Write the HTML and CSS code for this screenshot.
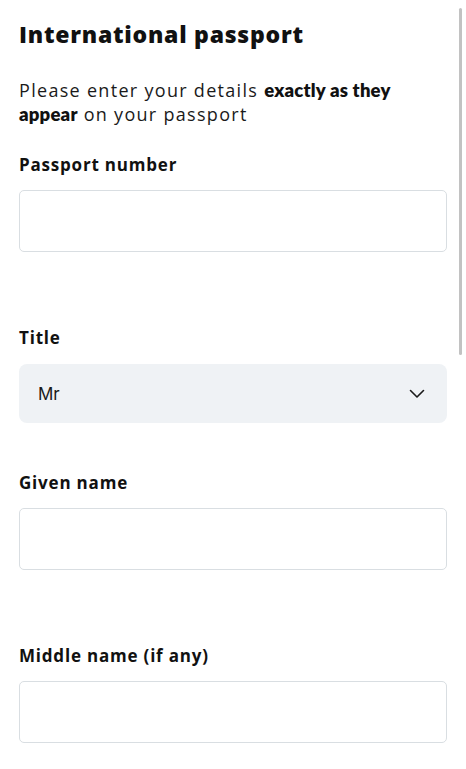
FILE: index.html
```html
<!DOCTYPE html>
<html lang="en">
<head>
<meta charset="utf-8">
<title>International passport</title>
<link rel="stylesheet" href="styles.css">
</head>
<body>
<main class="page">
  <h1 class="title">International passport</h1>
  <p class="intro">Please enter your details <strong>exactly as they</strong> <strong>appear</strong> on your passport</p>
  <form class="form">
    <div class="field field--text">
      <label class="label" for="pn">Passport number</label>
      <input class="input" id="pn" type="text">
    </div>
    <div class="field field--select">
      <label class="label" for="title">Title</label>
      <div class="select">
        <span class="select-value">Mr</span>
        <svg class="chevron" width="16" height="10" viewBox="0 0 16 10" aria-hidden="true"><path d="M1.5 1.5 L8 8 L14.5 1.5" fill="none" stroke="#1a1a1a" stroke-width="1.6" stroke-linecap="round" stroke-linejoin="round"/></svg>
      </div>
    </div>
    <div class="field field--text">
      <label class="label" for="gn">Given name</label>
      <input class="input" id="gn" type="text">
    </div>
    <div class="field field--text">
      <label class="label" for="mn">Middle name (if any)</label>
      <input class="input" id="mn" type="text">
    </div>
  </form>
</main>
<div class="scrollbar"></div>
</body>
</html>
```
FILE: styles.css
```css
html, body {
  margin: 0;
  padding: 0;
  background: #ffffff;
}
body {
  font-family: "Open Sans", sans-serif;
  color: #111111;
  overflow: hidden;
}
.page {
  padding: 18px 19px 0 19px;
}
.title {
  margin: 0;
  font-size: 23px;
  line-height: 32px;
  font-weight: 800;
  letter-spacing: 0.75px;
}
.intro {
  margin: 28px 0 0 0;
  max-width: 410px;
  font-size: 18px;
  line-height: 24px;
  font-weight: 400;
  letter-spacing: 1.3px;
  color: #1a1a1a;
}
.intro strong {
  font-family: Lato, "Open Sans", sans-serif;
  font-size: 18.5px;
  line-height: 1;
  font-weight: 800;
  letter-spacing: 0.2px;
  color: #111111;
}
.form {
  margin-top: 28px;
  display: flex;
  flex-direction: column;
}
.field {
  display: flex;
  flex-direction: column;
}
.field--text {
  padding-bottom: 75px;
}
.field--select {
  padding-bottom: 49px;
}
.label {
  font-size: 17px;
  line-height: 22px;
  font-weight: 700;
  letter-spacing: 0.8px;
  margin-bottom: 14px;
}
.input {
  box-sizing: border-box;
  height: 62px;
  width: 100%;
  border: 1px solid #d9dee2;
  border-radius: 5px;
  background: #ffffff;
  margin: 0;
  padding: 0 18px;
  font: inherit;
}
.select {
  box-sizing: border-box;
  height: 59px;
  background: #eff2f5;
  border-radius: 8px;
  display: flex;
  align-items: center;
  justify-content: space-between;
  padding: 0 22px 0 19px;
  margin-top: 1px;
}
.select-value {
  font-family: Inter, sans-serif;
  font-size: 17px;
  color: #1a1a1a;
}
.chevron {
  display: block;
}
.scrollbar {
  position: absolute;
  top: 8px;
  left: 459px;
  width: 3px;
  height: 347px;
  background: #c2c2c2;
  border-radius: 2px;
}
```
